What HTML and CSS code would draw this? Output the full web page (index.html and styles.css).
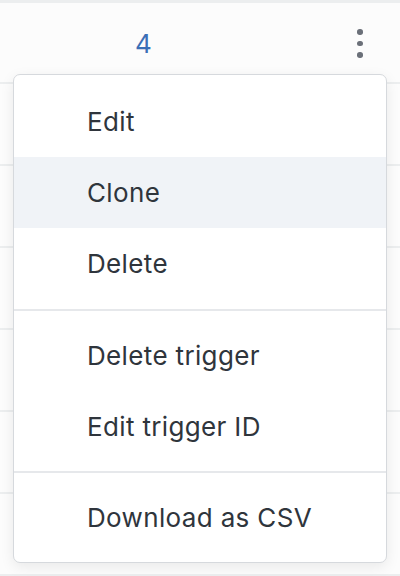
FILE: index.html
```html
<!DOCTYPE html>
<html>
<head>
<meta charset="utf-8">
<link rel="stylesheet" href="styles.css">
</head>
<body>
<div class="table">
  <div class="row first">
    <span class="count">4</span>
    <span class="kebab"><i></i><i></i><i></i></span>
  </div>
  <div class="row"></div>
  <div class="row"></div>
  <div class="row"></div>
  <div class="row"></div>
  <div class="row"></div>
  <div class="row"></div>
</div>
<div class="menu">
  <div class="group g1">
    <div class="item">Edit</div>
    <div class="item active">Clone</div>
    <div class="item">Delete</div>
  </div>
  <div class="group">
    <div class="item">Delete trigger</div>
    <div class="item">Edit trigger ID</div>
  </div>
  <div class="group">
    <div class="item">Download as CSV</div>
  </div>
</div>
</body>
</html>
```
FILE: styles.css
```css
html, body {
  margin: 0;
  padding: 0;
  width: 400px;
  height: 576px;
  overflow: hidden;
  background: #fcfcfc;
  font-family: Inter, "Noto Sans", sans-serif;
}
.table {
  border-top: 3px solid #eceeef;
}
.row {
  height: 80px;
  border-bottom: 2px solid #eceeef;
}
.row.first {
  height: 79px;
  position: relative;
}
.count {
  position: absolute;
  left: 135px;
  top: 25px;
  font-size: 26px;
  color: #3b6fb6;
}
.kebab {
  position: absolute;
  left: 357px;
  top: 26px;
  display: flex;
  flex-direction: column;
  gap: 6px;
}
.kebab i {
  display: block;
  width: 5.5px;
  height: 5.5px;
  border-radius: 50%;
  background: #6b7079;
}
.menu {
  position: absolute;
  left: 13px;
  top: 74px;
  width: 372px;
  background: #fff;
  border: 1px solid #d6d9dd;
  border-radius: 7px;
  box-shadow: 0 4px 14px rgba(0, 0, 0, 0.08);
  color: #2f353c;
  font-size: 26px;
  letter-spacing: 0.35px;
}
.group {
  padding: 9px 0;
}
.group.g1 {
  padding: 11px 0 10px;
}
.group + .group {
  border-top: 2px solid #e6e8eb;
}
.item {
  height: 71px;
  display: flex;
  align-items: center;
  padding-left: 73px;
}
.item.active {
  background: #f0f3f7;
}
```
